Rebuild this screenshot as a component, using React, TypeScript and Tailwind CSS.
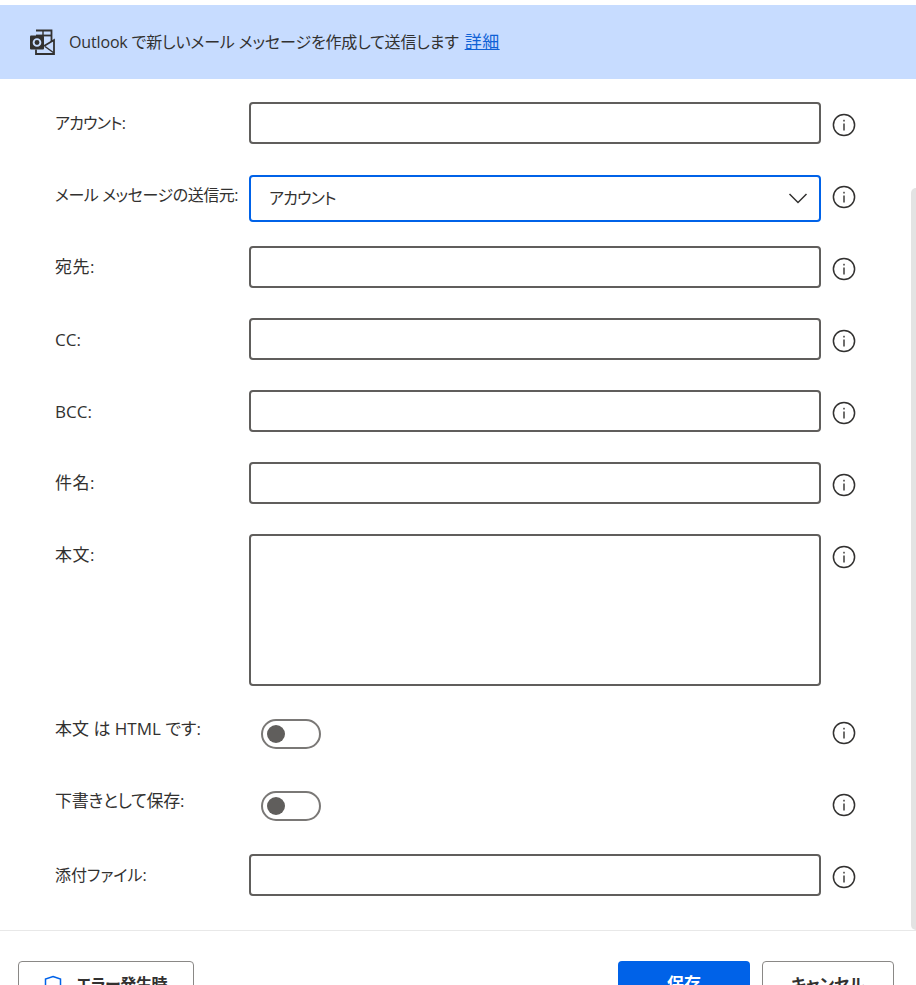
const font = "font-['Open_Sans','Noto_Sans_CJK_JP',sans-serif] [font-feature-settings:'palt']"

function InfoIcon() {
  return (
    <svg width="24" height="24" viewBox="0 0 24 24" className="shrink-0" fill="none">
      <circle cx="12" cy="12" r="10.6" stroke="#323130" strokeWidth="1.5" />
      <rect x="11.3" y="10.5" width="1.4" height="7" fill="#323130" />
      <rect x="11.3" y="6.8" width="1.4" height="1.7" fill="#323130" />
    </svg>
  )
}

function OutlookIcon() {
  return (
    <svg width="26" height="26" viewBox="0 0 26 26" fill="none">
      <path d="M7 1.5H22.5V13" stroke="#323130" strokeWidth="1.8" />
      <path d="M7 6.5H22.5" stroke="#323130" strokeWidth="1.8" />
      <path d="M14 1.5V6.5" stroke="#323130" strokeWidth="1.4" />
      <rect x="1" y="6.5" width="14" height="14" rx="1" fill="#323130" />
      <circle cx="8" cy="13.5" r="3.4" stroke="#c7dcff" strokeWidth="1.9" />
      <path d="M7 20.5V25H25V11L15 17" stroke="#323130" strokeWidth="1.8" />
      <path d="M16 17.5L25 24" stroke="#323130" strokeWidth="1.5" />
    </svg>
  )
}

type RowProps = {
  label: string
  children: React.ReactNode
  height?: string
  labelClass?: string
}

function Row({ label, children, height = 'h-[72px]', labelClass = 'text-[16px] pt-[9px]' }: RowProps) {
  return (
    <div className={`flex ${height}`}>
      <div className={`w-[194px] shrink-0 whitespace-nowrap leading-[24px] text-[#323130] ${labelClass}`}>{label}</div>
      <div className="w-[572px] shrink-0">{children}</div>
      <div className="ml-[11px] pt-[11px]">
        <InfoIcon />
      </div>
    </div>
  )
}

function TextBox({ height = 'h-[42px]' }: { height?: string }) {
  return <div className={`${height} w-full rounded-[4px] border-2 border-[#605e5c] bg-white`} />
}

function Toggle() {
  return (
    <div className="ml-[12px] mt-[9px] flex h-[30px] w-[60px] items-center rounded-full border-2 border-[#7a7876] bg-white pl-[4px]">
      <div className="h-[18px] w-[18px] rounded-full bg-[#605e5c]" />
    </div>
  )
}

export default function App() {
  return (
    <div className={`flex h-[985px] w-[916px] flex-col overflow-hidden bg-white ${font}`}>
      <div className="mt-[5px] flex h-[74px] shrink-0 items-center gap-[14px] bg-[#c7dcff] pl-[29px] text-[#323130]">
        <OutlookIcon />
        <span className="text-[16px] tracking-[-0.15px]">
          Outlook で新しいメール メッセージを作成して送信します <a className="ml-[2px] text-[17px] tracking-[0.5px] text-[#0f62d6] underline">詳細</a>
        </span>
      </div>

      <div className="flex h-[852px] shrink-0 border-b border-[#e8e8e8]">
        <div className="flex-1 pl-[55px] pt-[23px]">
          <Row label="アカウント:" labelClass="pt-[9px] text-[16px] tracking-[-0.8px]"><TextBox /></Row>
          <Row label="メール メッセージの送信元:" labelClass="pt-[9px] text-[16px] tracking-[-0.45px]">
            <div className="mt-px flex h-[47px] items-center justify-between rounded-[4px] border-2 border-[#0062e8] bg-white pb-[2px] pl-[18px] pr-[11px] text-[#323130]">
              <span className="text-[16px] tracking-[-0.8px]">アカウント</span>
              <svg width="20" height="12" viewBox="0 0 20 12" fill="none">
                <path d="M1.5 2L10 10.5L18.5 2" stroke="#323130" strokeWidth="1.5" />
              </svg>
            </div>
          </Row>
          <Row label="宛先:" labelClass="pt-[9px] text-[17px] tracking-[0.5px]"><TextBox /></Row>
          <Row label="CC:" labelClass="pt-[10px] text-[17px]"><TextBox /></Row>
          <Row label="BCC:" labelClass="pt-[10px] text-[17px]"><TextBox /></Row>
          <Row label="件名:" labelClass="pt-[9px] text-[17px] tracking-[0.5px]"><TextBox /></Row>
          <Row label="本文:" height="h-[176px]" labelClass="pt-[9px] text-[17px] tracking-[0.5px]"><TextBox height="h-[152px]" /></Row>
          <Row label="本文 は HTML です:" labelClass="pt-[7px] text-[17px]"><Toggle /></Row>
          <Row label="下書きとして保存:" labelClass="pt-[7px] text-[17px] tracking-[-0.3px]"><Toggle /></Row>
          <Row label="添付ファイル:"><TextBox /></Row>
        </div>
        <div className="mt-[109px] h-[742px] w-[5px] rounded-tl-[5px] rounded-bl-[5px] bg-[#e3e3e3]" />
      </div>

      <div className="flex items-start justify-between pl-[18px] pr-[22px] pt-[30px]">
        <button className="flex h-[46px] w-[176px] items-center rounded-[4px] border border-[#8a8886] bg-white pl-[25px] text-[16px] font-semibold tracking-[-0.4px] text-[#323130]">
          <svg width="18" height="22" viewBox="0 0 18 22" fill="none" className="mr-[14px] mt-[3px] shrink-0">
            <path d="M9 1.5L16.5 4V11C16.5 15.5 13 18.5 9 20.5C5 18.5 1.5 15.5 1.5 11V4Z" stroke="#0062e8" strokeWidth="1.5" />
          </svg>
          エラー発生時
        </button>
        <div className="flex gap-[12px]">
          <button className="h-[46px] w-[132px] rounded-[4px] bg-[#0062e8] text-[17px] font-semibold text-white">保存</button>
          <button className="h-[46px] w-[132px] rounded-[4px] border border-[#8a8886] bg-white text-[16px] font-semibold text-[#323130]">キャンセル</button>
        </div>
      </div>
    </div>
  )
}
